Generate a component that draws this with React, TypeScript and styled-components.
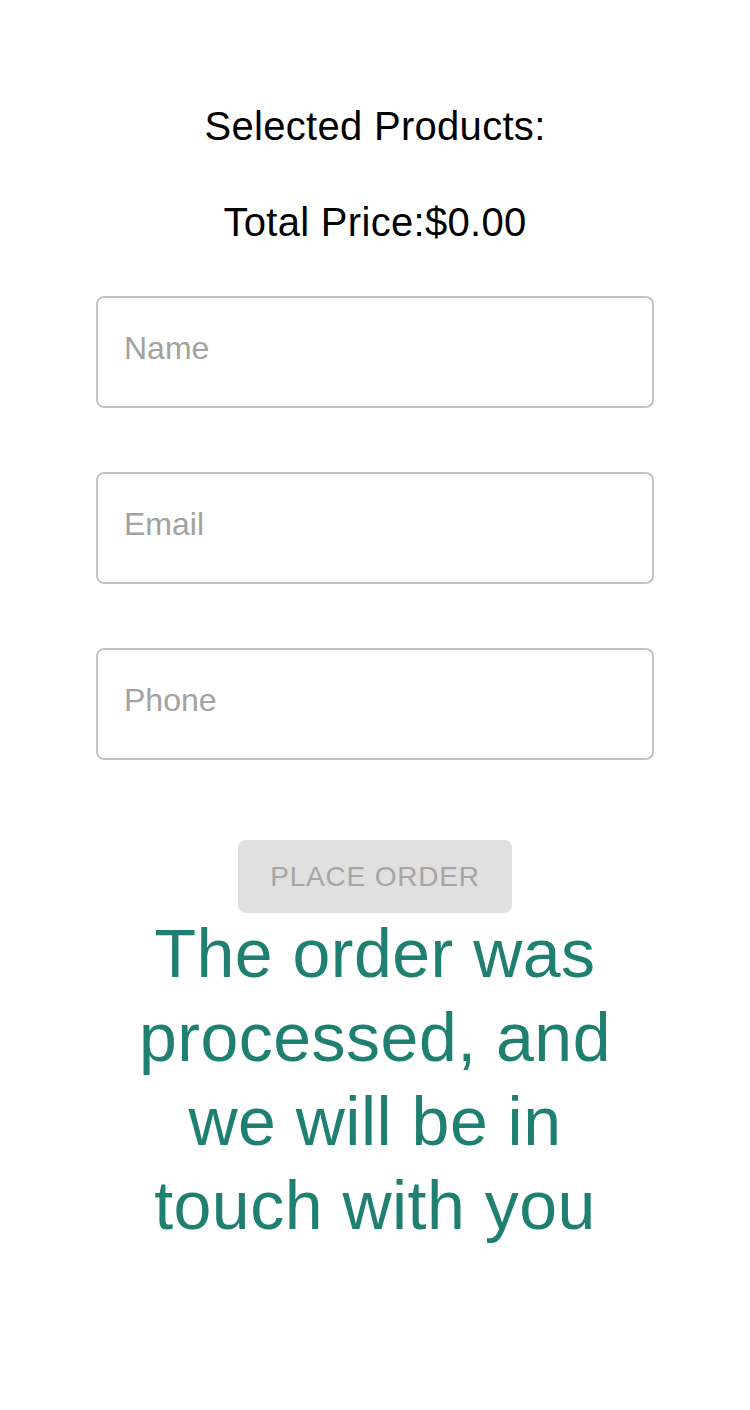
import React from "react";
import styled, { createGlobalStyle } from "styled-components";

const GlobalStyle = createGlobalStyle`
  html, body {
    margin: 0;
    padding: 0;
    background: #ffffff;
    font-family: "Liberation Sans", Arial, sans-serif;
  }
  * { box-sizing: border-box; }
`;

const Page = styled.main`
  width: 558px;
  margin: 0 auto;
  padding-top: 102px;
  display: flex;
  flex-direction: column;
  align-items: center;
`;

const Heading = styled.h6<{ $gap: number }>`
  margin: 0 0 ${(p) => p.$gap}px;
  font-size: 40px;
  line-height: 48px;
  font-weight: 400;
  letter-spacing: 0.3px;
  color: #000000;
  text-align: center;
`;

const Form = styled.form`
  width: 100%;
  display: flex;
  flex-direction: column;
  align-items: center;
`;

const Fields = styled.div`
  width: 100%;
  display: flex;
  flex-direction: column;
  gap: 64px;
`;

const Field = styled.input`
  width: 100%;
  height: 112px;
  padding: 24px 26px 32px;
  border: 2px solid #c4c4c4;
  border-radius: 8px;
  font-family: "Liberation Sans", Arial, sans-serif;
  font-size: 32px;
  color: #222;
  background: #fff;
  outline: none;
  &::placeholder {
    color: #a2a2a2;
    opacity: 1;
  }
`;

const SubmitButton = styled.button`
  margin-top: 80px;
  height: 73px;
  padding: 12px 32px;
  border: none;
  border-radius: 8px;
  background: #e0e0e0;
  color: #a6a6a6;
  font-family: "Liberation Sans", Arial, sans-serif;
  font-size: 28px;
  line-height: 49px;
  letter-spacing: 0.8px;
  text-transform: uppercase;
  font-weight: 400;
  cursor: default;
`;

const Success = styled.h4`
  margin: -2px 0 0;
  font-size: 68px;
  line-height: 84px;
  letter-spacing: 0.5px;
  font-weight: 400;
  color: #1f8071;
  text-align: center;
`;

export default function App() {
  return (
    <>
      <GlobalStyle />
      <Page>
        <Heading $gap={48}>Selected Products:</Heading>
        <Heading $gap={50}>Total Price:$0.00</Heading>
        <Form onSubmit={(e) => e.preventDefault()}>
          <Fields>
            <Field type="text" placeholder="Name" />
            <Field type="email" placeholder="Email" />
            <Field type="tel" placeholder="Phone" />
          </Fields>
          <SubmitButton type="submit" disabled>
            Place Order
          </SubmitButton>
          <Success>The order was processed, and we will be in touch with you</Success>
        </Form>
      </Page>
    </>
  );
}
